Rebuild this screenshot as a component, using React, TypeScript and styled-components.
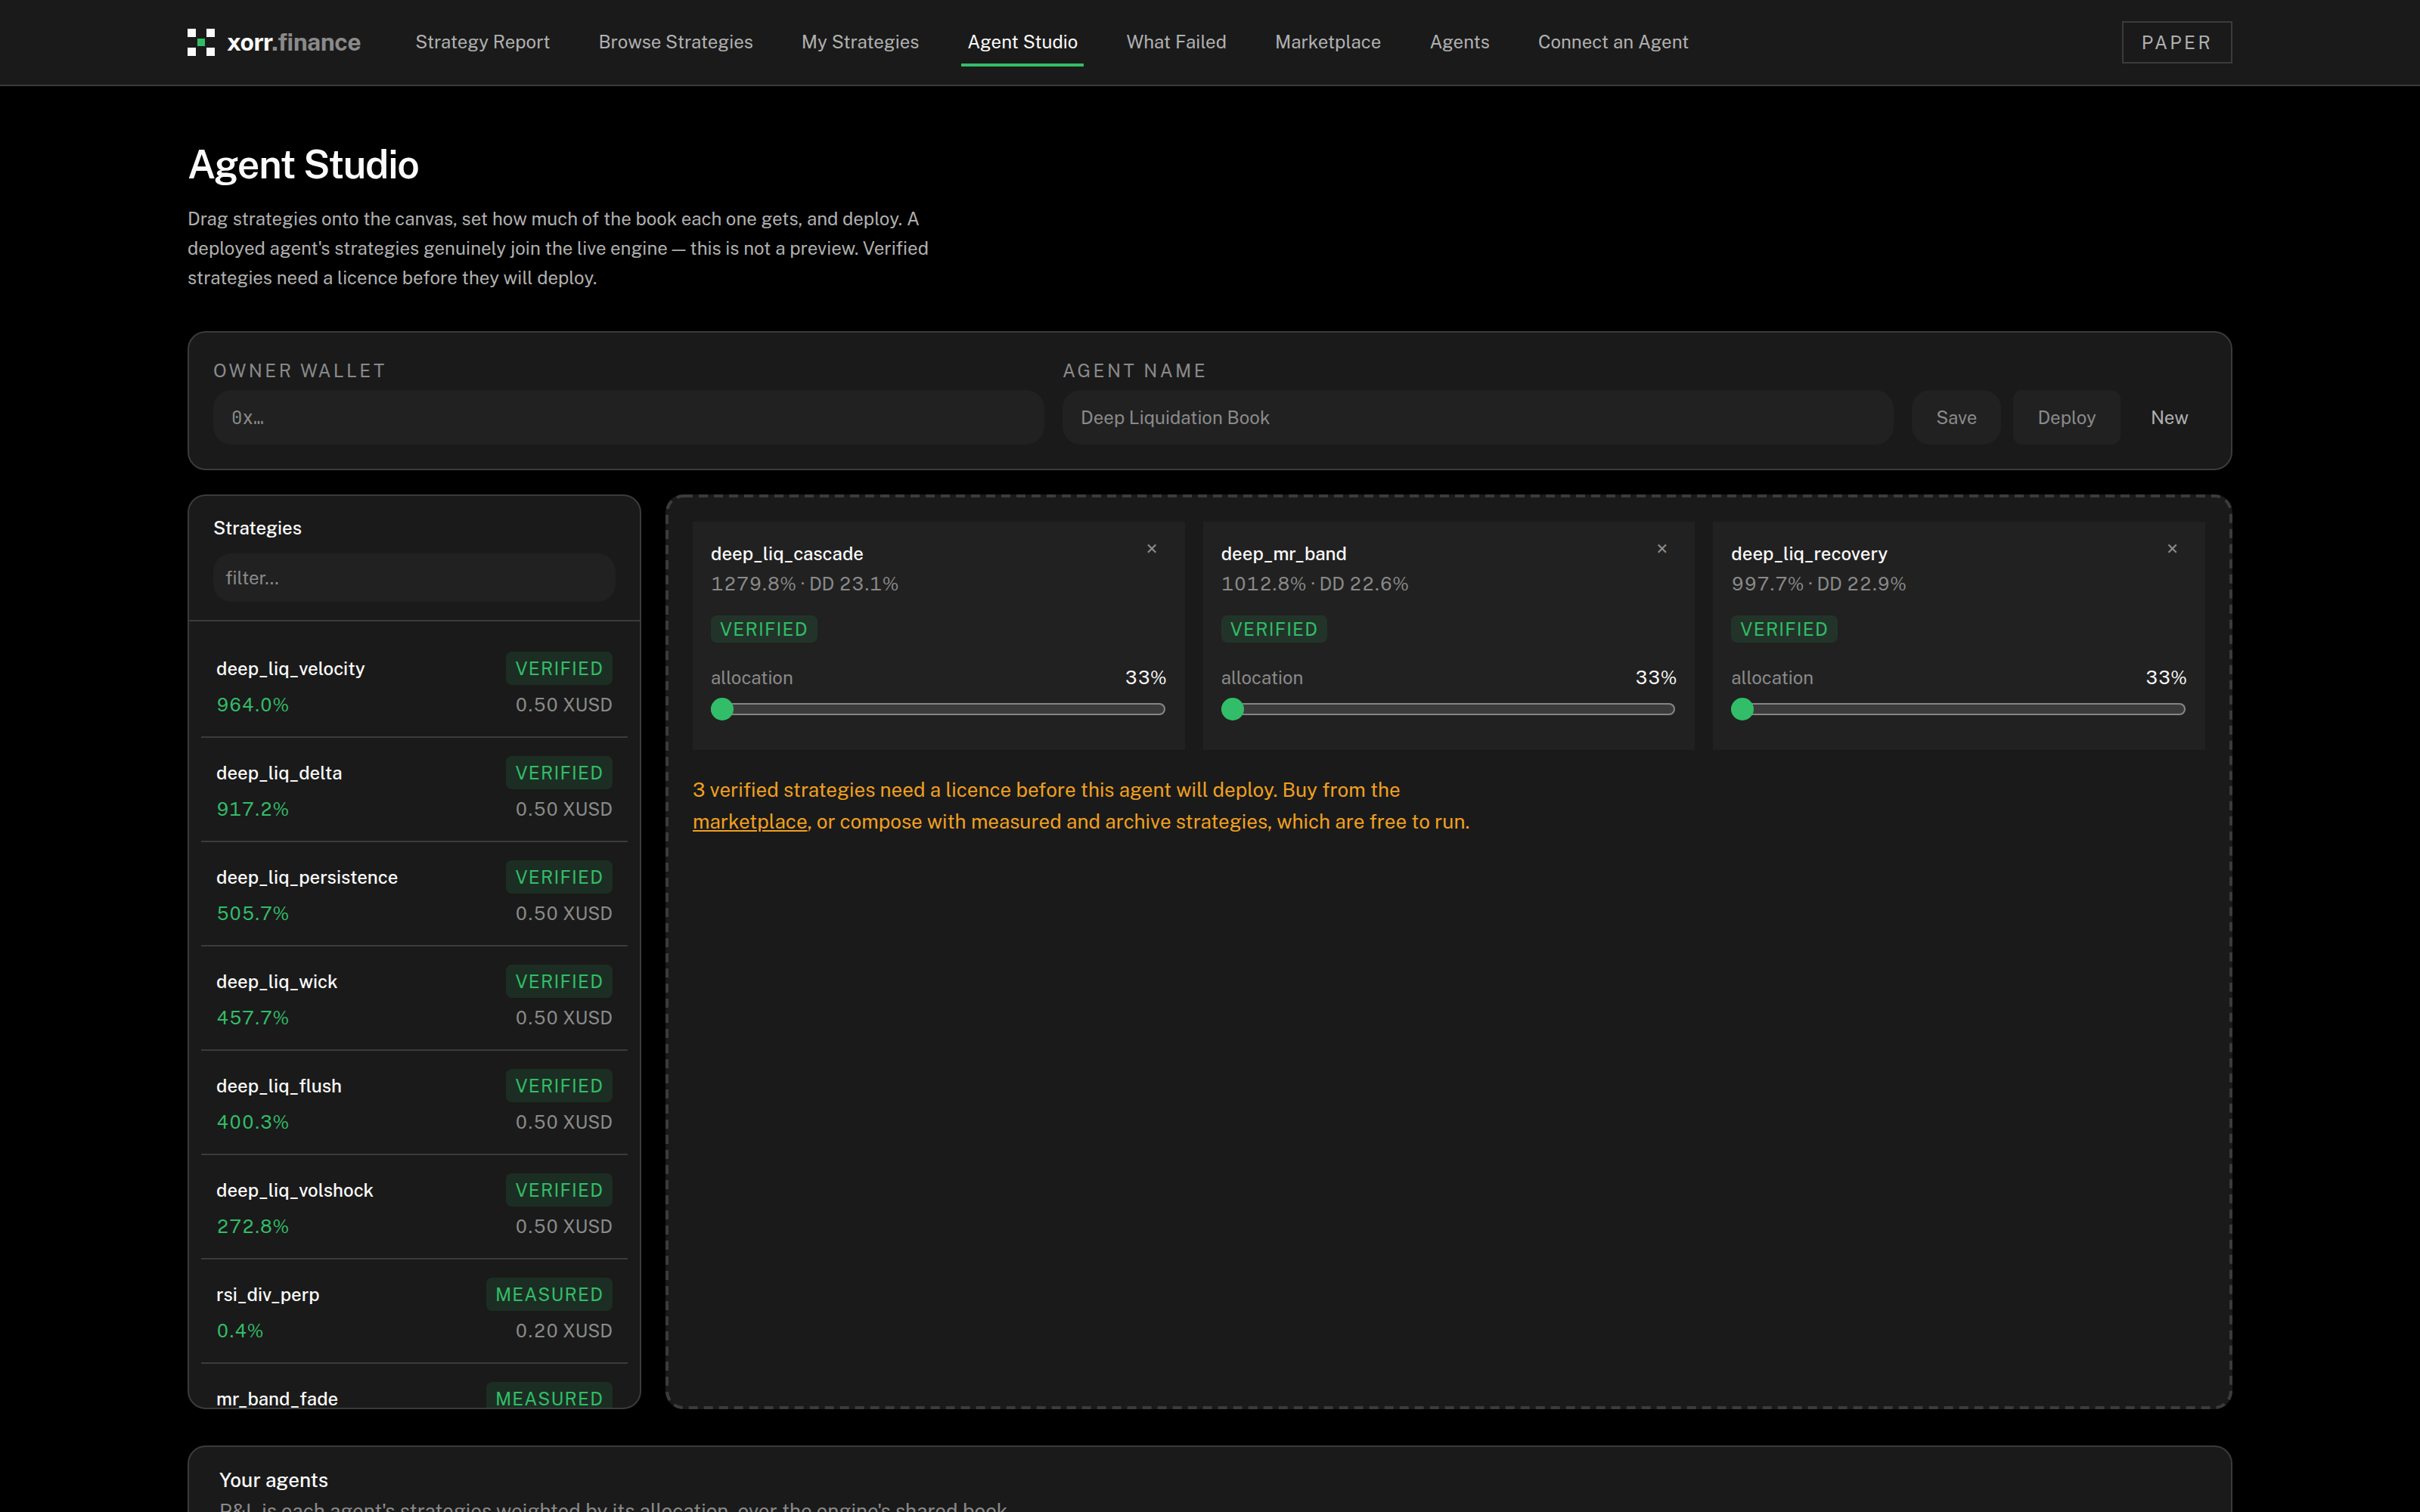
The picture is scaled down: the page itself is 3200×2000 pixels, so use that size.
import React, { useState } from 'react';
import styled, { createGlobalStyle, css } from 'styled-components';

const color = {
  page: '#000000',
  panel: '#1a1a1a',
  raised: '#212121',
  line: '#3b3b3b',
  text: '#fafafa',
  soft: '#b0b0b0',
  muted: '#8a8a8a',
  green: '#32bd68',
  amber: '#f0a020',
};

const sans = '"Public Sans", "Libre Franklin", Inter, sans-serif';
const mono = '"JetBrains Mono", "IBM Plex Mono", "DejaVu Sans Mono", monospace';

const GlobalStyle = createGlobalStyle`
  *, *::before, *::after { box-sizing: border-box; }
  html { scrollbar-width: none; background: ${color.page}; }
  body {
    margin: 0;
    background: ${color.page};
    color: ${color.text};
    font: 400 24px/36px ${sans};
  }
  h1, h2, p, ul { margin: 0; padding: 0; }
  ul { list-style: none; }
  button, input { font: inherit; }
`;

const Header = styled.header`
  background: ${color.panel};
  border-bottom: 2px solid ${color.line};
`;

const HeaderInner = styled.div`
  display: flex;
  align-items: center;
  max-width: 2800px;
  height: 112px;
  margin: 0 auto;
  padding: 0 48px;
`;

const Brand = styled.a`
  display: flex;
  align-items: center;
  gap: 16px;
  margin-right: 64px;
  color: ${color.text};
  font-size: 32px;
  font-weight: 700;
  letter-spacing: -0.015em;
  text-decoration: none;
`;

const BrandSuffix = styled.span`
  color: ${color.muted};
`;

const Nav = styled.nav`
  display: flex;
  flex: 1;
  gap: 48px;
`;

const NavLink = styled.a<{ $active?: boolean }>`
  padding: 13px 8px 11px;
  border-bottom: 4px solid ${(p) => (p.$active ? color.green : 'transparent')};
  color: ${(p) => (p.$active ? color.text : color.soft)};
  text-decoration: none;
  white-space: nowrap;
`;

const ModeTag = styled.span`
  padding: 8px 24px;
  border: 2px solid ${color.line};
  color: ${color.soft};
  letter-spacing: 0.14em;
`;

const Main = styled.main`
  max-width: 2800px;
  margin: 0 auto;
  padding: 72px 48px 96px;
`;

const Title = styled.h1`
  font-size: 52px;
  line-height: 64px;
  font-weight: 600;
  letter-spacing: -0.025em;
`;

const Intro = styled.p`
  max-width: 1024px;
  margin-top: 20px;
  color: ${color.soft};
  line-height: 39px;
`;

const Panel = styled.section`
  background: ${color.panel};
  border: 2px solid ${color.line};
  border-radius: 24px;
`;

const SetupPanel = styled(Panel)`
  display: flex;
  align-items: flex-end;
  gap: 24px;
  margin-top: 51px;
  padding: 32px;
`;

const Field = styled.label`
  display: flex;
  flex: 1;
  flex-direction: column;
  gap: 8px;
  color: ${color.muted};
  letter-spacing: 0.14em;
`;

const TextBox = styled.input<{ $mono?: boolean; $small?: boolean }>`
  width: 100%;
  height: ${(p) => (p.$small ? '64px' : '72px')};
  padding: 0 ${(p) => (p.$small ? '16px' : '24px')};
  border: 0;
  border-radius: 24px;
  outline: none;
  background: ${color.raised};
  color: ${color.text};
  font-family: ${(p) => (p.$mono ? mono : sans)};
  letter-spacing: normal;

  &::placeholder { color: ${color.muted}; opacity: 1; }
`;

const Actions = styled.div`
  display: flex;
  gap: 16px;
`;

const Button = styled.button<{ $kind: 'save' | 'deploy' | 'ghost' }>`
  height: 72px;
  padding: 0 32px;
  border: 0;
  border-radius: 24px;
  background: ${color.raised};
  color: ${color.muted};
  ${(p) => p.$kind === 'deploy' && css`border-radius: 12px;`}
  ${(p) => p.$kind === 'ghost' && css`
    padding: 0 24px;
    background: transparent;
    color: ${color.soft};
  `}
`;

const Workspace = styled.div`
  display: grid;
  grid-template-columns: 600px 1fr;
  gap: 32px;
  margin-top: 32px;
`;

const Library = styled(Panel)`
  display: flex;
  flex-direction: column;
  max-height: 1210px;
  overflow: hidden;
`;

const LibraryHead = styled.div`
  display: flex;
  flex-direction: column;
  gap: 16px;
  padding: 24px 32px;
  border-bottom: 2px solid ${color.line};
`;

const SectionTitle = styled.h2`
  font-size: 24px;
  line-height: 36px;
  font-weight: 500;
`;

const StrategyList = styled.ul`
  padding: 16px;
  overflow-y: auto;
  scrollbar-width: none;
`;

const StrategyItem = styled.li`
  display: flex;
  flex-direction: column;
  gap: 8px;
  padding: 24px 20px;
  border-bottom: 2px solid ${color.line};
`;

const Split = styled.div`
  display: flex;
  align-items: center;
  justify-content: space-between;
`;

const StrategyName = styled.span`
  font-weight: 500;
`;

const Figure = styled.span<{ $tone: 'gain' | 'muted' | 'text' }>`
  color: ${(p) => (p.$tone === 'gain' ? color.green : p.$tone === 'muted' ? color.muted : color.text)};
  font-variant-numeric: tabular-nums;
`;

const Badge = styled.span<{ $tall?: boolean }>`
  padding: ${(p) => (p.$tall ? '4px' : '0')} 12px;
  border-radius: 8px;
  background: rgba(50, 189, 104, 0.13);
  color: ${color.green};
  line-height: 36px;
  letter-spacing: 0.05em;
`;

const Canvas = styled.section`
  position: relative;
  padding: 36px;
  background: ${color.panel};
  border-radius: 24px;
`;

const DropOutline = styled.svg`
  position: absolute;
  inset: 0;
  width: 100%;
  height: 100%;
  pointer-events: none;

  rect {
    x: 2px;
    y: 2px;
    width: calc(100% - 4px);
    height: calc(100% - 4px);
    rx: 22px;
    fill: none;
    stroke: ${color.line};
    stroke-width: 4px;
    stroke-dasharray: 12px 8px;
  }
`;

const CardGrid = styled.div`
  display: grid;
  grid-template-columns: repeat(3, 1fr);
  gap: 24px;
`;

const Card = styled.article`
  display: flex;
  flex-direction: column;
  padding: 24px 24px 38px;
  background: ${color.raised};
`;

const CardTop = styled.div`
  display: flex;
  align-items: flex-start;
  justify-content: space-between;
`;

const CardTitles = styled.div`
  display: flex;
  flex-direction: column;
  gap: 4px;
`;

const RemoveButton = styled.button`
  padding: 0 12px;
  border: 0;
  background: none;
  color: ${color.muted};
  font-size: 28px;
  line-height: 24px;
`;

const BadgeRow = styled.div`
  display: flex;
  margin: 24px 0;
`;

const Allocation = styled.label`
  display: flex;
  flex-direction: column;
  gap: 8px;
  padding-top: 4px;
  color: ${color.muted};
`;

const Slider = styled.input`
  height: 32px;
  margin: 0 2px 0 0;
  appearance: none;
  background: transparent;

  &::-webkit-slider-runnable-track {
    height: 16px;
    border-radius: 8px;
    background: ${color.line};
    box-shadow: inset 0 0 0 2px #858585;
  }
  &::-webkit-slider-thumb {
    width: 30px;
    height: 30px;
    margin-top: -7px;
    appearance: none;
    border-radius: 50%;
    background: ${color.green};
  }
`;

const Notice = styled.p`
  max-width: 1056px;
  margin-top: 32px;
  color: ${color.amber};
  font-size: 26px;
  line-height: 42px;
`;

const NoticeLink = styled.a`
  color: inherit;
`;

const AgentsPanel = styled(Panel)`
  margin-top: 48px;
  padding: 24px 40px 48px;
`;

const AgentsTitle = styled.h2`
  font-size: 26px;
  line-height: 40px;
  font-weight: 500;
`;

const AgentsText = styled.p`
  color: ${color.muted};
  font-size: 26px;
  line-height: 42px;
`;

const nav = [
  'Strategy Report',
  'Browse Strategies',
  'My Strategies',
  'Agent Studio',
  'What Failed',
  'Marketplace',
  'Agents',
  'Connect an Agent',
];

const strategies = [
  { name: 'deep_liq_velocity', gain: '964.0%', tier: 'VERIFIED', price: '0.50 XUSD' },
  { name: 'deep_liq_delta', gain: '917.2%', tier: 'VERIFIED', price: '0.50 XUSD' },
  { name: 'deep_liq_persistence', gain: '505.7%', tier: 'VERIFIED', price: '0.50 XUSD' },
  { name: 'deep_liq_wick', gain: '457.7%', tier: 'VERIFIED', price: '0.50 XUSD' },
  { name: 'deep_liq_flush', gain: '400.3%', tier: 'VERIFIED', price: '0.50 XUSD' },
  { name: 'deep_liq_volshock', gain: '272.8%', tier: 'VERIFIED', price: '0.50 XUSD' },
  { name: 'rsi_div_perp', gain: '0.4%', tier: 'MEASURED', price: '0.20 XUSD' },
  { name: 'mr_band_fade', gain: '0.3%', tier: 'MEASURED', price: '0.20 XUSD' },
];

const picked = [
  { name: 'deep_liq_cascade', meta: '1279.8% · DD 23.1%' },
  { name: 'deep_mr_band', meta: '1012.8% · DD 22.6%' },
  { name: 'deep_liq_recovery', meta: '997.7% · DD 22.9%' },
];

function Logo() {
  return (
    <svg width="36" height="36" viewBox="0 0 36 36" aria-hidden="true" shapeRendering="crispEdges">
      <path fill={color.text} d="M0 0h11v11H0zM25 0h11v11H25zM0 25h11v11H0zM25 25h11v11H25z" />
      <path fill={color.green} d="M13 13h10v10H13z" />
    </svg>
  );
}

function AgentCard({ name, meta }: { name: string; meta: string }) {
  const [weight, setWeight] = useState(0);
  return (
    <Card>
      <CardTop>
        <CardTitles>
          <StrategyName>{name}</StrategyName>
          <Figure $tone="muted">{meta}</Figure>
        </CardTitles>
        <RemoveButton type="button" aria-label={`Remove ${name}`}>×</RemoveButton>
      </CardTop>
      <BadgeRow>
        <Badge>VERIFIED</Badge>
      </BadgeRow>
      <Allocation>
        <Split>
          allocation
          <Figure $tone="text">33%</Figure>
        </Split>
        <Slider
          type="range"
          min={0}
          max={100}
          value={weight}
          onChange={(e) => setWeight(Number(e.target.value))}
        />
      </Allocation>
    </Card>
  );
}

export default function App() {
  return (
    <>
      <GlobalStyle />
      <Header>
        <HeaderInner>
          <Brand href="#">
            <Logo />
            <span>xorr<BrandSuffix>.finance</BrandSuffix></span>
          </Brand>
          <Nav>
            {nav.map((item) => (
              <NavLink key={item} href="#" $active={item === 'Agent Studio'}>{item}</NavLink>
            ))}
          </Nav>
          <ModeTag>PAPER</ModeTag>
        </HeaderInner>
      </Header>
      <Main>
        <Title>Agent Studio</Title>
        <Intro>
          Drag strategies onto the canvas, set how much of the book each one gets, and deploy. A
          deployed agent's strategies genuinely join the live engine — this is not a preview. Verified
          strategies need a licence before they will deploy.
        </Intro>

        <SetupPanel>
          <Field>
            OWNER WALLET
            <TextBox $mono placeholder="0x…" />
          </Field>
          <Field>
            AGENT NAME
            <TextBox placeholder="Deep Liquidation Book" />
          </Field>
          <Actions>
            <Button type="button" $kind="save">Save</Button>
            <Button type="button" $kind="deploy">Deploy</Button>
            <Button type="button" $kind="ghost">New</Button>
          </Actions>
        </SetupPanel>

        <Workspace>
          <Library>
            <LibraryHead>
              <SectionTitle>Strategies</SectionTitle>
              <TextBox $small placeholder="filter…" aria-label="Filter strategies" />
            </LibraryHead>
            <StrategyList>
              {strategies.map((s) => (
                <StrategyItem key={s.name}>
                  <Split>
                    <StrategyName>{s.name}</StrategyName>
                    <Badge $tall>{s.tier}</Badge>
                  </Split>
                  <Split>
                    <Figure $tone="gain">{s.gain}</Figure>
                    <Figure $tone="muted">{s.price}</Figure>
                  </Split>
                </StrategyItem>
              ))}
            </StrategyList>
          </Library>

          <Canvas>
            <DropOutline aria-hidden="true">
              <rect />
            </DropOutline>
            <CardGrid>
              {picked.map((p) => (
                <AgentCard key={p.name} {...p} />
              ))}
            </CardGrid>
            <Notice>
              3 verified strategies need a licence before this agent will deploy. Buy from
              the <NoticeLink href="#">marketplace</NoticeLink>, or compose with measured and archive
              strategies, which are free to run.
            </Notice>
          </Canvas>
        </Workspace>

        <AgentsPanel>
          <AgentsTitle>Your agents</AgentsTitle>
          <AgentsText>
            P&amp;L is each agent's strategies weighted by its allocation, over the engine's shared book.
          </AgentsText>
        </AgentsPanel>
      </Main>
    </>
  );
}
